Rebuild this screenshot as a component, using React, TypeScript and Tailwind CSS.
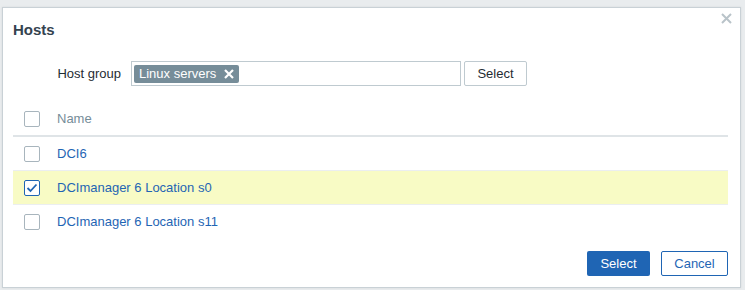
import React from "react";

const rows = [
    { name: "DCI6", checked: false },
    { name: "DCImanager 6 Location s0", checked: true },
    { name: "DCImanager 6 Location s11", checked: false },
];

function Checkbox({ checked }: { checked?: boolean }) {
    return (
        <span
            className={
                checked
                    ? "flex h-4 w-4 items-center justify-center rounded-[2px] border border-[#1f65b4] bg-white"
                    : "flex h-4 w-4 items-center justify-center rounded-[2px] border border-[#a8b5bd] bg-white"
            }
        >
            {checked && (
                <svg width="12" height="10" viewBox="0 0 12 10" fill="none">
                    <path d="M1.5 5 L4.5 8 L10.5 1.5" stroke="#1f65b4" strokeWidth="1.8" />
                </svg>
            )}
        </span>
    );
}

export default function App() {
    return (
        <div className="h-[290px] w-[745px] overflow-hidden bg-[#e9ecee] pl-[2px] pt-[7px] font-['Liberation_Sans',Arial,sans-serif] text-[13px] text-[#1f2c33]">
            <div className="relative flex h-[281px] w-[739px] flex-col border border-[#c9d1d6] bg-white shadow-[0_0_2px_rgba(0,0,0,0.08)]">
                {/* header */}
                <div className="flex h-[44px] items-center px-[10px]">
                    <h4 className="text-[15px] font-bold text-[#34434f]">Hosts</h4>
                </div>
                <button className="absolute right-[4px] top-0 flex h-5 w-5 items-center justify-center">
                    <svg width="11" height="11" viewBox="0 0 11 11">
                        <path d="M1 1 L10 10 M10 1 L1 10" stroke="#b9c3c9" strokeWidth="2" />
                    </svg>
                </button>

                <div className="flex flex-col px-[10px]">
                    {/* filter */}
                    <div className="mt-[9px] flex items-center">
                        <label className="w-[108px] text-right">Host group</label>
                        <div className="ml-[10px] flex h-[25px] w-[330px] items-center border border-[#bfcad0] px-[2px]">
                            <span className="flex h-[18px] items-center gap-[8px] rounded-[2px] bg-[#768d99] pl-[5px] pr-[5px] text-white">
                                Linux servers
                                <svg width="10" height="10" viewBox="0 0 10 10">
                                    <path d="M1 1 L9 9 M9 1 L1 9" stroke="white" strokeWidth="2.2" />
                                </svg>
                            </span>
                        </div>
                        <button className="ml-[3px] h-[25px] w-[63px] rounded-[2px] border border-[#bfcad0] bg-white text-[#1f2c33]">
                            Select
                        </button>
                    </div>

                    {/* table */}
                    <div className="mt-[16px] w-[715px]">
                        <div className="flex h-[35px] items-center border-b-2 border-[#dfe4e7]">
                            <div className="w-[44px] pl-[11px]">
                                <Checkbox />
                            </div>
                            <span className="text-[#768d99]">Name</span>
                        </div>
                        {rows.map((row, idx) => (
                            <div
                                key={row.name}
                                className={
                                    row.checked
                                        ? "flex h-[34px] items-center border-b border-[#ebeef0] bg-[#f8fbc5]"
                                        : idx === rows.length - 1
                                          ? "flex h-[34px] items-center"
                                          : "flex h-[34px] items-center border-b border-[#ebeef0]"
                                }
                            >
                                <div className="w-[44px] pl-[11px]">
                                    <Checkbox checked={row.checked} />
                                </div>
                                <a className="text-[#1f65b4]">{row.name}</a>
                            </div>
                        ))}
                    </div>
                </div>

                {/* footer */}
                <div className="mt-auto mb-[11px] flex justify-end gap-[11px] pr-[12px]">
                    <button className="h-[25px] w-[63px] rounded-[2px] bg-[#1f65b4] text-white">Select</button>
                    <button className="h-[25px] w-[67px] rounded-[2px] border border-[#1f65b4] bg-white text-[#1f65b4]">
                        Cancel
                    </button>
                </div>
            </div>
        </div>
    );
}
